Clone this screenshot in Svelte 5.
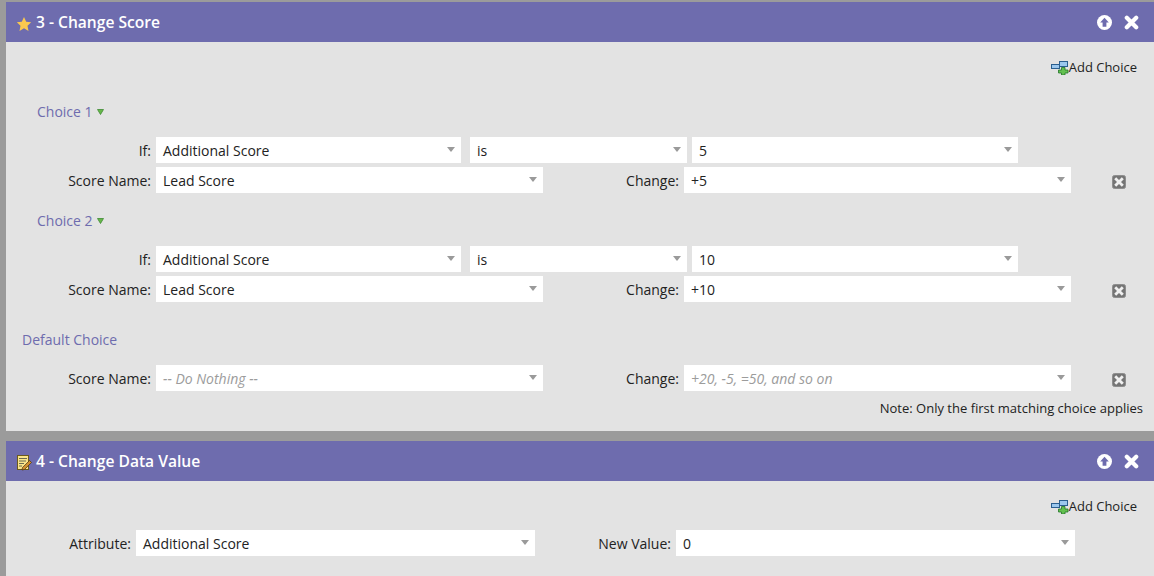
<script>
  const choices = [
    { name: 'Choice 1', value: '5', change: '+5' },
    { name: 'Choice 2', value: '10', change: '+10' }
  ];
</script>

{#snippet field(text, cls = '')}
  <div class="field {cls}">
    <span>{text}</span>
    <svg class="caret" width="8" height="5" viewBox="0 0 8 5"><path d="M0 0H8L4 5Z" fill="#9a9a9a"/></svg>
  </div>
{/snippet}

{#snippet del()}
  <svg class="del" width="14" height="14" viewBox="0 0 14 14">
    <rect x="0.5" y="0.5" width="13" height="13" rx="2" fill="#757575" stroke="#8e8e8e"/>
    <path d="M4.2 4.2L9.8 9.8M9.8 4.2L4.2 9.8" stroke="#f0f0f0" stroke-width="2.8" stroke-linecap="square"/>
  </svg>
{/snippet}

{#snippet headerTools()}
  <div class="tools">
    <svg width="15" height="15" viewBox="0 0 15 15"><circle cx="7.5" cy="7.5" r="7.5" fill="#fff"/><path d="M7.5 2.8L11.8 7.6H9.4V11.8H5.6V7.6H3.2Z" fill="#6e6cae"/></svg>
    <svg width="15" height="15" viewBox="0 0 15 15"><path d="M2.8 2.8L12.2 12.2M12.2 2.8L2.8 12.2" stroke="#fff" stroke-width="4.2" stroke-linecap="round"/></svg>
  </div>
{/snippet}

{#snippet addChoice()}
  <div class="add">
    <svg width="18" height="15" viewBox="0 0 18 15">
      <path d="M5 5.5H10" stroke="#2b5f8f"/>
      <rect x="8.5" y="1.5" width="8" height="5" fill="#9cc8ee" stroke="#2b5f8f"/>
      <rect x="0.5" y="4.5" width="8" height="4" fill="#9cc8ee" stroke="#2b5f8f"/>
      <path d="M7.5 10H10.5V7.5H14V10H17V13H14V15H10.5V13H7.5Z" fill="#63c04f" stroke="#23752a" stroke-width=".8"/>
    </svg>
    <span>Add Choice</span>
  </div>
{/snippet}

<div class="page">
  <section class="panel first">
    <header>
      <svg class="hicon" width="16" height="16" viewBox="0 0 16 16"><path d="M8 1L10.2 5.7L15.2 6.3L11.5 9.8L12.5 14.9L8 12.3L3.5 14.9L4.5 9.8L0.8 6.3L5.8 5.7Z" fill="#fbc94f"/></svg>
      <h2>3 - Change Score</h2>
      {@render headerTools()}
    </header>
    <div class="body">
      {@render addChoice()}
      {#each choices as c, i}
        <div class="choice-title" class:next={i > 0}>
          <span>{c.name}</span>
          <svg width="7" height="6" viewBox="0 0 7 6"><path d="M0.5 0.5H6.5L3.5 5.5Z" fill="#67b84a" stroke="#3f8a33" stroke-width=".8"/></svg>
        </div>
        <div class="row if">
          <label>If:</label>
          {@render field('Additional Score')}
          {@render field('is')}
          {@render field(c.value)}
        </div>
        <div class="row score">
          <label>Score Name:</label>
          {@render field('Lead Score')}
          <label>Change:</label>
          {@render field(c.change)}
          {@render del()}
        </div>
      {/each}
      <div class="default-title">Default Choice</div>
      <div class="row score">
        <label>Score Name:</label>
        {@render field('-- Do Nothing --', 'ph')}
        <label>Change:</label>
        {@render field('+20, -5, =50, and so on', 'ph')}
        {@render del()}
      </div>
      <div class="note">Note: Only the first matching choice applies</div>
    </div>
  </section>

  <section class="panel last">
    <header>
      <svg class="hicon" width="16" height="16" viewBox="0 0 16 16">
        <rect x="1.5" y="0.5" width="11" height="14" fill="#fbe58a" stroke="#6b5a1e"/>
        <path d="M3 3.5H11M3 6H10M3 8.5H8M3 11H6" stroke="#6b6b50"/>
        <path d="M6.5 12.5L13.5 5.5L15.5 7.5L8.5 14.5L6 15Z" fill="#d08f2f" stroke="#4a3210" stroke-width=".7"/>
      </svg>
      <h2>4 - Change Data Value</h2>
      {@render headerTools()}
    </header>
    <div class="body">
      {@render addChoice()}
      <div class="row attr">
        <label>Attribute:</label>
        {@render field('Additional Score')}
        <label>New Value:</label>
        {@render field('0')}
      </div>
    </div>
  </section>
</div>

<style>
  :global(body) {
    margin: 0;
    background: #9b9b9b;
    font-family: "Open Sans", sans-serif;
    color: #222;
  }
  .page {
    height: 576px;
    padding-top: 2px;
    box-sizing: border-box;
    overflow: hidden;
    display: flex;
    flex-direction: column;
    gap: 10px;
  }
  .panel {
    margin-left: 6px;
    background: #e3e3e3;
  }
  .panel.last {
    flex: 1;
  }
  header {
    height: 40px;
    background: #6e6cae;
    display: flex;
    align-items: center;
    padding-left: 10px;
    padding-right: 15px;
    color: #fff;
  }
  .hicon {
    margin-top: 3px;
    margin-right: 4px;
  }
  h2 {
    margin: 0;
    font-size: 15.6px;
    font-weight: 600;
    flex: 1;
  }
  .tools {
    display: flex;
    align-items: center;
    gap: 12px;
  }
  .body {
    padding-top: 15px;
  }
  .first .body {
    height: 389px;
    box-sizing: border-box;
  }
  .add {
    display: flex;
    justify-content: flex-end;
    align-items: center;
    height: 20px;
    padding-right: 17px;
    font-size: 13px;
    color: #222;
  }
  .choice-title {
    margin-top: 24px;
    margin-left: 31px;
    margin-bottom: 16px;
    height: 20px;
    display: flex;
    align-items: center;
    gap: 4px;
    font-size: 14px;
    color: #6e6cae;
  }
  .choice-title svg {
    margin-top: 1px;
  }
  .choice-title.next {
    margin-top: 17px;
  }
  .default-title {
    margin-top: 28px;
    margin-left: 16px;
    margin-bottom: 15px;
    height: 20px;
    line-height: 20px;
    font-size: 14px;
    color: #6e6cae;
  }
  .row {
    display: grid;
    height: 26px;
    align-items: center;
    font-size: 14px;
  }
  label {
    text-align: right;
    color: #222;
  }
  .row.if label:first-child,
  .row.score label:first-child {
    padding-right: 1px;
  }
  .field {
    height: 26px;
    background: #fff;
    display: flex;
    align-items: center;
    justify-content: space-between;
    padding: 0 6px 0 7px;
    margin-left: 4px;
    box-sizing: border-box;
  }
  .row.if {
    grid-template-columns: 146px 309px 226px 331px;
    margin-bottom: 4px;
  }
  .row.if .field:nth-of-type(2) { margin-left: 9px; }
  .row.if .field:nth-of-type(3) { margin-left: 5px; }
  .row.score {
    grid-template-columns: 146px 391px 136px 392px 14px;
  }
  .row.score .field:nth-of-type(2) { margin-left: 5px; }
  .row.attr {
    grid-template-columns: 125px 404px 136px 404px;
    margin-top: 14px;
  }
  .row.attr .field { margin-left: 5px; }
  .ph span { color: #9c9c9c; font-style: italic; }
  .caret { margin-top: -2px; }
  .del { margin-left: 41px; margin-top: 3px; }
  .note {
    margin-top: 8px;
    text-align: right;
    padding-right: 11px;
    font-size: 13px;
    color: #222;
  }
</style>
